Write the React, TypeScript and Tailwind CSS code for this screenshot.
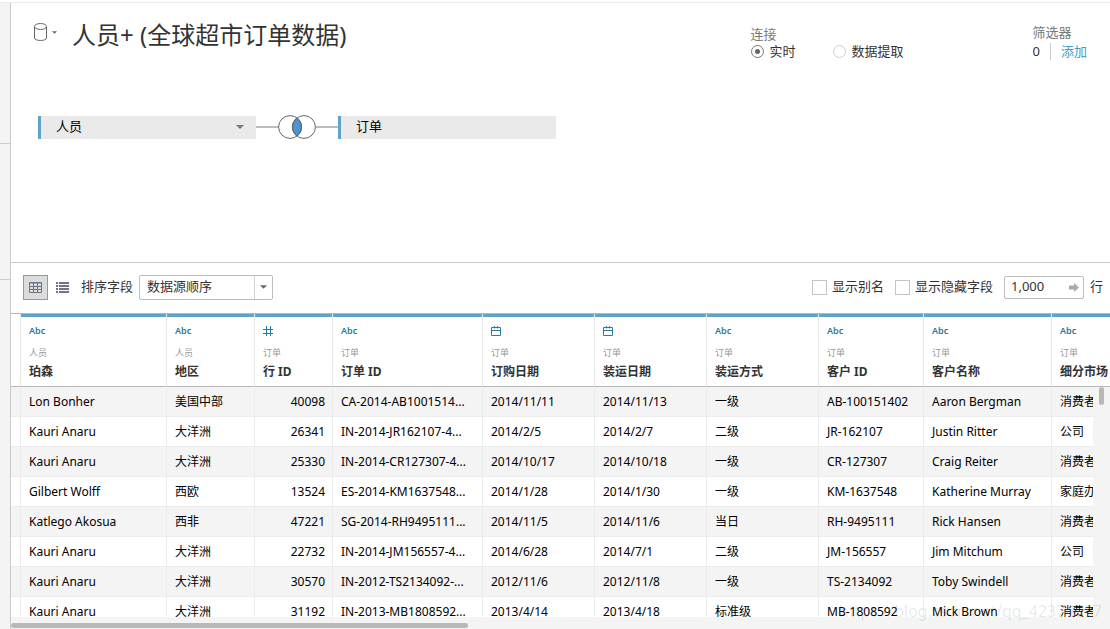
import type { ReactNode } from "react";

type FieldType = "text" | "number" | "date";

type Column = {
  type: FieldType;
  source: string;
  name: string;
  width: string;
};

const columns: Column[] = [
  { type: "text", source: "人员", name: "珀森", width: "w-[146px]" },
  { type: "text", source: "人员", name: "地区", width: "w-[88px]" },
  { type: "number", source: "订单", name: "行 ID", width: "w-[78px]" },
  { type: "text", source: "订单", name: "订单 ID", width: "w-[150px]" },
  { type: "date", source: "订单", name: "订购日期", width: "w-[112px]" },
  { type: "date", source: "订单", name: "装运日期", width: "w-[112px]" },
  { type: "text", source: "订单", name: "装运方式", width: "w-[112px]" },
  { type: "text", source: "订单", name: "客户 ID", width: "w-[105px]" },
  { type: "text", source: "订单", name: "客户名称", width: "w-[128px]" },
  { type: "text", source: "订单", name: "细分市场", width: "" },
];

const rows = [
  ["Lon Bonher", "美国中部", "40098", "CA-2014-AB1001514...", "2014/11/11", "2014/11/13", "一级", "AB-100151402", "Aaron Bergman", "消费者"],
  ["Kauri Anaru", "大洋洲", "26341", "IN-2014-JR162107-4...", "2014/2/5", "2014/2/7", "二级", "JR-162107", "Justin Ritter", "公司"],
  ["Kauri Anaru", "大洋洲", "25330", "IN-2014-CR127307-4...", "2014/10/17", "2014/10/18", "一级", "CR-127307", "Craig Reiter", "消费者"],
  ["Gilbert Wolff", "西欧", "13524", "ES-2014-KM1637548...", "2014/1/28", "2014/1/30", "一级", "KM-1637548", "Katherine Murray", "家庭办公室"],
  ["Katlego Akosua", "西非", "47221", "SG-2014-RH9495111...", "2014/11/5", "2014/11/6", "当日", "RH-9495111", "Rick Hansen", "消费者"],
  ["Kauri Anaru", "大洋洲", "22732", "IN-2014-JM156557-4...", "2014/6/28", "2014/7/1", "二级", "JM-156557", "Jim Mitchum", "公司"],
  ["Kauri Anaru", "大洋洲", "30570", "IN-2012-TS2134092-...", "2012/11/6", "2012/11/8", "一级", "TS-2134092", "Toby Swindell", "消费者"],
  ["Kauri Anaru", "大洋洲", "31192", "IN-2013-MB1808592...", "2013/4/14", "2013/4/18", "标准级", "MB-1808592", "Mick Brown", "消费者"],
];

function Caret({ className }: { className: string }) {
  return (
    <svg viewBox="0 0 8 4" className={className} aria-hidden="true">
      <path d="M0 0h8L4 4z" fill="currentColor" />
    </svg>
  );
}

function TypeIcon({ type }: { type: FieldType }) {
  if (type === "number") {
    return (
      <svg viewBox="0 0 10 10" className="size-[10px]" fill="none" stroke="currentColor" aria-hidden="true">
        <path d="M3.5 0v10M7.5 0v10M0 3.5h10M0 7.5h10" />
      </svg>
    );
  }
  if (type === "date") {
    return (
      <svg viewBox="0 0 10 10" className="size-[10px]" fill="none" stroke="currentColor" aria-hidden="true">
        <path d="M.5 1.5h9v8h-9zM0 4.5h10M3.5 0v2.5M6.5 0v2.5" />
      </svg>
    );
  }
  return <span className="text-[9px] font-semibold">Abc</span>;
}

function CheckOption({ children }: { children: ReactNode }) {
  return (
    <label className="flex items-center gap-[5px] whitespace-nowrap">
      <input type="checkbox" className="size-[15px] appearance-none border border-[#c4c4c4] bg-white checked:bg-[#5fa3c7]" />
      {children}
    </label>
  );
}

function ModeOption({ label, checked }: { label: string; checked?: boolean }) {
  return (
    <label className="flex items-center gap-[6px] whitespace-nowrap">
      <input
        type="radio"
        name="mode"
        defaultChecked={checked}
        className="flex size-[13px] appearance-none items-center justify-center rounded-full border border-[#cfcfcf] before:size-[5px] before:rounded-full checked:border-[#777] checked:before:bg-[#666]"
      />
      {label}
    </label>
  );
}

function Header() {
  return (
    <header className="flex h-[45px] items-start pl-[23px] pr-[23px] pt-4">
      <button type="button" aria-label="数据源" className="mt-1 flex items-center gap-[5px] text-[#666]">
        <svg viewBox="0 0 13 18" className="h-[18px] w-[13px]" fill="none" stroke="currentColor" aria-hidden="true">
          <ellipse cx="6.5" cy="3.5" rx="6" ry="3" />
          <path d="M.5 3.500v11.500c0 3.300 12 3.300 12 0v-11.500" />
        </svg>
        <Caret className="h-[3px] w-[5px]" />
      </button>
      <h1 className="ml-[15px] whitespace-nowrap text-2xl leading-8 text-[#333]">人员+ (全球超市订单数据)</h1>
      <div className="ml-auto flex text-[13px] leading-[17px]">
        <fieldset className="mr-[129px] mt-[7px]">
          <legend className="text-[#777]">连接</legend>
          <div className="flex gap-[37px]">
            <ModeOption label="实时" checked />
            <ModeOption label="数据提取" />
          </div>
        </fieldset>
        <section className="mt-[5px]">
          <h2 className="text-[#777]">筛选器</h2>
          <div className="mt-[2px] flex items-center">
            <span className="pr-[10px]">0</span>
            <a href="#filters" className="border-l border-[#ccc] pl-[10px] text-[#4a9cc4]">添加</a>
          </div>
        </section>
      </div>
    </header>
  );
}

function JoinCanvas() {
  return (
    <div className="mt-[67px] flex items-center pl-[27px] text-[13px] text-black">
      <button type="button" className="flex h-[23px] w-[218px] items-center justify-between border-l-[3px] border-[#5fa3c7] bg-[#eaeaea] pl-[15px] pr-3">
        人员
        <Caret className="h-1 w-2 text-[#6b7686]" />
      </button>
      <span className="h-[2px] w-[22px] bg-[#bdbdbd]" />
      <button type="button" aria-label="联接">
        <svg viewBox="0 0 38 24" className="h-6 w-[38px]" fill="none" stroke="#666" aria-hidden="true">
          <path d="M19 2.800a11.400 11.400 0 0 1 0 18.400a11.400 11.400 0 0 1 0-18.400z" fill="#4a96d2" />
          <circle cx="12" cy="12" r="11.4" />
          <circle cx="26" cy="12" r="11.4" />
        </svg>
      </button>
      <span className="h-[2px] w-[22px] bg-[#bdbdbd]" />
      <button type="button" className="flex h-[23px] w-[218px] items-center border-l-[3px] border-[#5fa3c7] bg-[#eaeaea] pl-[15px]">
        订单
      </button>
    </div>
  );
}

function Toolbar() {
  return (
    <div className="flex h-[50px] items-center pb-[2px] pl-3 pr-[7px] text-[13px]">
      <button type="button" aria-label="预览数据源" className="flex size-[25px] items-center justify-center border border-[#999] bg-[#dcdcdc] text-[#6b7686]">
        <svg viewBox="0 0 13 11" className="h-[11px] w-[13px]" fill="none" stroke="currentColor" aria-hidden="true">
          <path d="M.5 .5h12v10h-12zM0 1h13M0 4.5h13M0 7.5h13M4.5 1v10M8.5 1v10" />
        </svg>
      </button>
      <button type="button" aria-label="管理元数据" className="ml-2 text-[#6b7686]">
        <svg viewBox="0 0 13 11" className="h-[11px] w-[13px]" fill="currentColor" aria-hidden="true">
          <path d="M0 0h2v2H0zM0 3h2v2H0zM0 6h2v2H0zM0 9h2v2H0zM3 0h10v2H3zM3 3h10v2H3zM3 6h10v2H3zM3 9h10v2H3z" />
        </svg>
      </button>
      <label htmlFor="sort" className="ml-3 whitespace-nowrap">排序字段</label>
      <div className="relative ml-[6px]">
        <select id="sort" className="h-[25px] w-[134px] appearance-none rounded-[2px] border border-[#bdbdbd] bg-white pl-[7px]">
          <option>数据源顺序</option>
        </select>
        <span className="pointer-events-none absolute inset-y-px right-px flex w-[18px] items-center justify-center border-l border-[#d4d4d4] text-[#666]">
          <Caret className="h-1 w-[7px]" />
        </span>
      </div>
      <div className="ml-auto flex items-center">
        <CheckOption>显示别名</CheckOption>
        <span className="w-[11px]" />
        <CheckOption>显示隐藏字段</CheckOption>
        <label className="ml-[11px] flex items-center gap-[6px]">
          <span className="flex h-[23px] w-20 items-center rounded-[2px] border border-[#bdbdbd] pl-[6px] pr-1">
            <input type="text" defaultValue="1,000" className="w-full min-w-0 bg-transparent outline-none" />
            <svg viewBox="0 0 10 9" className="h-[9px] w-[10px] shrink-0 text-[#aaa]" fill="currentColor" aria-hidden="true">
              <path d="M0 2.500h5V0l5 4.500L5 9V6.500H0z" />
            </svg>
          </span>
          行
        </label>
      </div>
    </div>
  );
}

function DataGrid() {
  return (
    <div className="relative min-h-0 flex-1 overflow-hidden border-t border-[#b8b8b8]">
      <table className="w-full table-fixed border-separate border-spacing-0 text-xs">
        <thead>
          <tr>
            <td className="w-[10px] border-b border-r border-b-[#b8b8b8] border-r-[#e9e9e9]" />
            {columns.map((col) => (
              <th
                key={col.name}
                className={`${col.width} h-[73px] border-b border-r border-b-[#b8b8b8] border-r-[#e9e9e9] p-0 text-left align-top font-normal last:border-r-0`}
              >
                <div className="h-[3px] bg-[#5fa3c7]" />
                <div className="whitespace-nowrap pl-2 pt-2">
                  <div className="flex h-3 items-center text-[#2b7a9b]">
                    <TypeIcon type={col.type} />
                  </div>
                  <div className="mt-[10px] text-[9px] leading-3 text-[#999]">{col.source}</div>
                  <div className="mt-[5px] font-bold leading-4 text-[#333]">{col.name}</div>
                </div>
              </th>
            ))}
          </tr>
        </thead>
        <tbody className="text-black">
          {rows.map((row) => (
            <tr key={row[3]} className="odd:bg-[#f4f4f4]">
              <td className="border-b border-r border-[#ececec]" />
              {row.map((cell, i) => (
                <td
                  key={columns[i].name}
                  className={`h-[30px] overflow-hidden whitespace-nowrap border-b border-r border-[#ececec] py-0 pl-2 last:border-r-0 ${columns[i].type === "number" ? "pr-[7px] text-right" : ""}`}
                >
                  {cell}
                </td>
              ))}
            </tr>
          ))}
        </tbody>
      </table>
      <div className="absolute bottom-0 right-0 top-[73px] w-[17px] bg-[#f4f4f4]">
        <div className="ml-[6px] h-[18px] w-[5px] rounded-sm bg-[#b8b8b8]" />
      </div>
    </div>
  );
}

export default function App() {
  return (
    <div className="flex h-screen flex-col overflow-hidden bg-white pt-[2px] font-['Noto_Sans','Noto_Sans_CJK_SC',sans-serif] text-[#333]">
      <div className="flex min-h-0 flex-1 border-t border-[#ececec]">
        <aside className="flex w-[11px] shrink-0 flex-col border-r border-[#cacaca] bg-[#f4f4f4]">
          <div className="h-[141px] border-b border-[#cacaca]" />
          <div className="h-[136px] border-b border-[#cacaca]" />
        </aside>
        <main className="flex min-w-0 flex-1 flex-col">
          <section className="h-[260px] shrink-0 border-b border-[#cacaca]">
            <Header />
            <JoinCanvas />
          </section>
          <Toolbar />
          <DataGrid />
          <div className="h-3 shrink-0 bg-[#f4f4f4] pt-[6px]">
            <div className="h-[5px] w-[457px] rounded-sm bg-[#b8b8b8]" />
          </div>
        </main>
      </div>
      <div className="pointer-events-none absolute bottom-2 right-2 text-base leading-5 text-black/10">
        https://blog.csdn.net/qq_42374697
      </div>
    </div>
  );
}
